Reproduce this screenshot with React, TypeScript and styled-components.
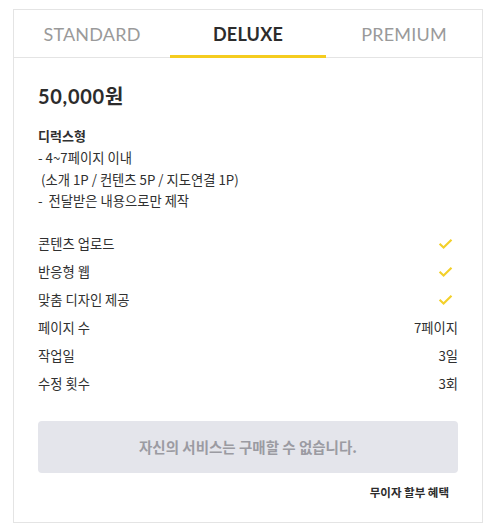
import React, { useState } from 'react';
import styled, { createGlobalStyle } from 'styled-components';

const GlobalStyle = createGlobalStyle`
    body {
        margin: 0;
        background: #fff;
        font-family: 'Noto Sans CJK KR', 'Noto Sans', sans-serif;
        color: #303030;
    }
`;

const Page = styled.div`
    padding: 9px 0 0 13px;
`;

const Card = styled.div`
    width: 468px;
    border: 1px solid #e4e4e4;
    box-sizing: content-box;
`;

const Tabs = styled.div`
    display: grid;
    grid-template-columns: repeat(3, 1fr);
    border-bottom: 1px solid #e4e4e4;
`;

const Tab = styled.button<{ active: boolean }>`
    height: 48px;
    padding: 2px 0 0;
    border: none;
    background: none;
    border-bottom: 3px solid ${props => (props.active ? '#f5cc1f' : 'transparent')};
    margin-bottom: -1px;
    font-family: 'Lato', 'Noto Sans', sans-serif;
    font-size: 18px;
    letter-spacing: 0.2px;
    font-weight: ${props => (props.active ? 700 : 400)};
    color: ${props => (props.active ? '#2c2c2c' : '#9a9a9a')};
    cursor: pointer;
`;

const Body = styled.div`
    padding: 26px 24px 21px 24px;
`;

const Price = styled.div`
    font-family: 'Lato', 'Noto Sans CJK KR', sans-serif;
    font-size: 20px;
    font-weight: 700;
    letter-spacing: 0.7px;
    line-height: 24px;
    color: #2c2c2c;
`;

const PlanName = styled.div`
    margin-top: 18px;
    font-size: 13px;
    font-weight: 700;
    line-height: 20px;
`;

const Description = styled.div`
    margin-top: 1px;
    font-size: 13.3px;
    line-height: 21.5px;
    white-space: pre;
`;

const Features = styled.div`
    margin-top: 18px;
    display: flex;
    flex-direction: column;
`;

const Row = styled.div`
    display: flex;
    justify-content: space-between;
    align-items: center;
    height: 28px;
    font-size: 13.3px;
`;

const Value = styled.span`
    font-size: 13.3px;
`;

const Check = styled.svg`
    width: 15px;
    height: 15px;
    margin-right: 5px;
`;

const BuyButton = styled.button`
    display: block;
    width: 100%;
    height: 52px;
    margin-top: 23px;
    border: none;
    border-radius: 4px;
    background: #e4e5eb;
    color: #9b9ba2;
    font-family: 'Noto Sans CJK KR', sans-serif;
    font-size: 14.5px;
    font-weight: 700;
    cursor: default;
`;

const Installment = styled.div`
    margin-top: 10px;
    padding-right: 9px;
    text-align: right;
    font-size: 11.5px;
    font-weight: 700;
    line-height: 18px;
    color: #2c2c2c;
`;

const plans = ['STANDARD', 'DELUXE', 'PREMIUM'];

const CheckIcon = () => (
    <Check viewBox="0 0 14 14">
        <path d="M1.5 7.2 L5.2 10.8 L12.6 3.4" fill="none" stroke="#f3d02a" strokeWidth="2" />
    </Check>
);

const features: { label: string; value?: string }[] = [
    { label: '콘텐츠 업로드' },
    { label: '반응형 웹' },
    { label: '맞춤 디자인 제공' },
    { label: '페이지 수', value: '7페이지' },
    { label: '작업일', value: '3일' },
    { label: '수정 횟수', value: '3회' },
];

const App = () => {
    const [selected, setSelected] = useState(1);

    return (
        <>
            <GlobalStyle />
            <Page>
                <Card>
                    <Tabs>
                        {plans.map((plan, i) => (
                            <Tab key={plan} active={selected === i} onClick={() => setSelected(i)}>
                                {plan}
                            </Tab>
                        ))}
                    </Tabs>
                    <Body>
                        <Price>50,000원</Price>
                        <PlanName>디럭스형</PlanName>
                        <Description>
                            {'- 4~7페이지 이내\n (소개 1P / 컨텐츠 5P / 지도연결 1P)\n-  전달받은 내용으로만 제작'}
                        </Description>
                        <Features>
                            {features.map(f => (
                                <Row key={f.label}>
                                    <span>{f.label}</span>
                                    {f.value ? <Value>{f.value}</Value> : <CheckIcon />}
                                </Row>
                            ))}
                        </Features>
                        <BuyButton>자신의 서비스는 구매할 수 없습니다.</BuyButton>
                        <Installment>무이자 할부 혜택</Installment>
                    </Body>
                </Card>
            </Page>
        </>
    );
};

export default App;
